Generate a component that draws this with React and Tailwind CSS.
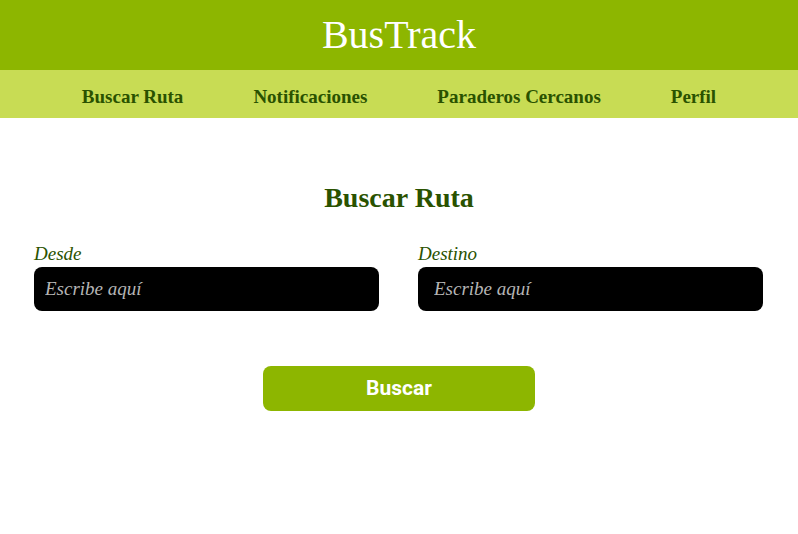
export default function App() {
  const serif = { fontFamily: '"Liberation Serif", "DejaVu Serif", serif' };
  return (
    <div className="min-h-[534px] w-full bg-white" style={serif}>
      <header className="h-[70px] bg-[#8db600] flex items-center justify-center">
        <h1 className="text-[40px] text-white leading-none">BusTrack</h1>
      </header>
      <nav className="h-[48px] bg-[#c8dc54] flex items-center justify-center gap-[70px] pt-[4px]">
        {["Buscar Ruta", "Notificaciones", "Paraderos Cercanos", "Perfil"].map((t) => (
          <a key={t} className="text-[19px] font-bold text-[#2a5200] leading-none">
            {t}
          </a>
        ))}
      </nav>
      <main className="px-[34px] pt-[66px]">
        <h2 className="text-center text-[28px] font-bold text-[#2a5200] leading-none">Buscar Ruta</h2>
        <div className="mt-[32px] grid grid-cols-2 gap-[39px] pr-[1px]">
          <div className="flex flex-col">
            <label className="italic text-[19px] text-[#2a5200] leading-none mb-[4px]">Desde</label>
            <input
              placeholder="Escribe aquí"
              className="h-[44px] rounded-[8px] bg-black px-[11px] italic text-[19px] text-white placeholder:text-[#b5b5b5] outline-none"
              style={serif}
            />
          </div>
          <div className="flex flex-col">
            <label className="italic text-[19px] text-[#2a5200] leading-none mb-[4px]">Destino</label>
            <input
              placeholder="Escribe aquí"
              className="h-[44px] rounded-[8px] bg-black px-[16px] italic text-[19px] text-white placeholder:text-[#b5b5b5] outline-none"
              style={serif}
            />
          </div>
        </div>
        <div className="mt-[55px] flex justify-center">
          <button
            className="w-[272px] h-[45px] rounded-[8px] bg-[#8db600] text-white text-[21px] font-bold"
            style={{ fontFamily: 'Roboto, "Liberation Sans", sans-serif' }}
          >
            Buscar
          </button>
        </div>
      </main>
    </div>
  );
}
